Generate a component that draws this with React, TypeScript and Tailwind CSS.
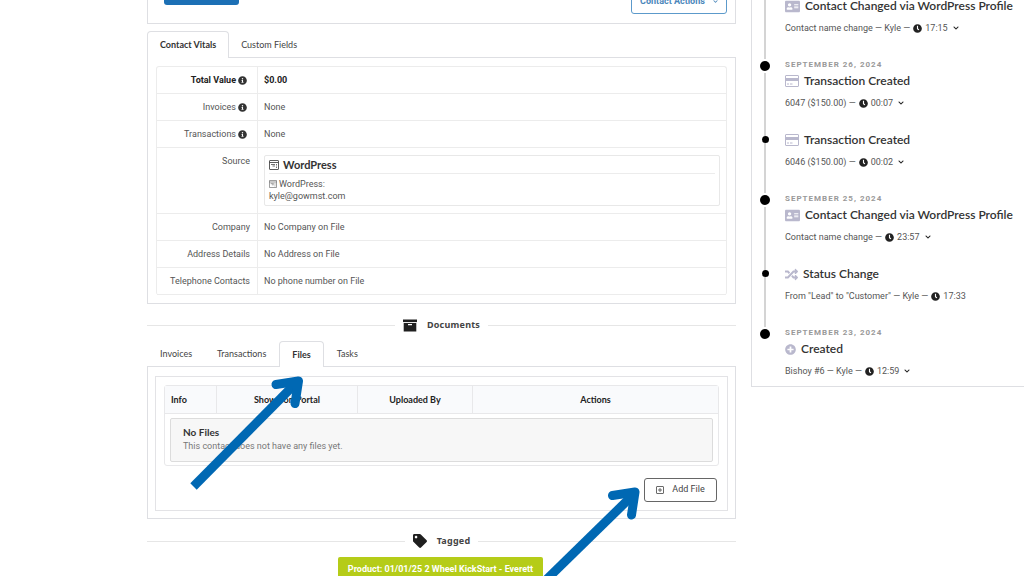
import type { ReactNode } from "react";
import {
  FaAddressCard,
  FaChevronDown,
  FaClock,
  FaInfoCircle,
  FaPlusCircle,
  FaRandom,
  FaTag,
} from "react-icons/fa";

const vitals = [
  { label: "Company", value: "No Company on File" },
  { label: "Address Details", value: "No Address on File" },
  { label: "Telephone Contacts", value: "No phone number on File" },
];

type TimelineEntry = {
  date?: string;
  icon: ReactNode;
  title: string;
  meta: string;
  time: string;
  expandable?: boolean;
};

function CardIcon() {
  return (
    <svg viewBox="0 0 14 12" className="h-3 w-3.5" aria-hidden>
      <rect x="0.5" y="0.5" width="13" height="11" rx="0.5" fill="none" stroke="currentColor" />
      <rect x="1" y="3" width="12" height="3" fill="currentColor" />
      <path d="M2 9h2M5 9h2.5" stroke="currentColor" />
    </svg>
  );
}

function FormIcon({ className }: { className: string }) {
  return (
    <svg viewBox="0 0 10 10" className={className} fill="none" stroke="currentColor" aria-hidden>
      <rect x="0.5" y="0.5" width="9" height="9" rx="0.5" strokeWidth="0.8" />
      <path d="M0.5 2.5h9" strokeWidth="0.8" />
      <path d="M2 4.5h4M7 4.5h1M3.5 6h2.500M7 6h1M7 7.500h1" strokeWidth="0.7" />
    </svg>
  );
}

function ArchiveIcon() {
  return (
    <svg viewBox="0 0 14 13" className="h-[13px] w-3.5" fill="#1f1f1f" aria-hidden>
      <path d="M0 0.5h14v2.6H0z" />
      <path d="M0.7 3.9h12.6v8.6H0.7zM5 5v1.2h4V5z" fillRule="evenodd" />
    </svg>
  );
}

const timeline: TimelineEntry[] = [
  {
    icon: <FaAddressCard className="size-[15px]" />,
    title: "Contact Changed via WordPress Profile",
    meta: "Contact name change — Kyle —",
    time: "17:15",
    expandable: true,
  },
  {
    date: "September 26, 2024",
    icon: <CardIcon />,
    title: "Transaction Created",
    meta: "6047 ($150.00) —",
    time: "00:07",
    expandable: true,
  },
  {
    icon: <CardIcon />,
    title: "Transaction Created",
    meta: "6046 ($150.00) —",
    time: "00:02",
    expandable: true,
  },
  {
    date: "September 25, 2024",
    icon: <FaAddressCard className="size-[15px]" />,
    title: "Contact Changed via WordPress Profile",
    meta: "Contact name change —",
    time: "23:57",
    expandable: true,
  },
  {
    icon: <FaRandom className="size-[13px]" />,
    title: "Status Change",
    meta: "From \"Lead\" to \"Customer\" — Kyle —",
    time: "17:33",
  },
  {
    date: "September 23, 2024",
    icon: <FaPlusCircle className="size-[11px]" />,
    title: "Created",
    meta: "Bishoy #6 — Kyle —",
    time: "12:59",
    expandable: true,
  },
];

function VitalRow({ label, info, bold, children }: {
  label: string;
  info?: boolean;
  bold?: boolean;
  children: ReactNode;
}) {
  return (
    <tr className={bold ? "font-bold text-[#222]" : ""}>
      <th
        scope="row"
        className={
          "w-[101px] border-r border-b border-[#ececec] py-[7px] pr-[7px] text-right align-top leading-3 whitespace-nowrap " +
          (bold ? "font-bold" : "font-normal")
        }
      >
        <span className={info ? "inline-flex items-center gap-0.5 pr-[3px]" : ""}>
          {label}
          {info && <FaInfoCircle className="size-[9px] text-[#333]" />}
        </span>
      </th>
      <td className="border-b border-[#ececec] px-1.5 py-[7px] align-top leading-3">{children}</td>
    </tr>
  );
}

function Divider({ icon, label }: { icon: ReactNode; label: string }) {
  return (
    <div className="flex h-4 items-center">
      <span className="h-px flex-1 bg-[#e6e6e6]" />
      <h2 className="flex items-center gap-2.5 px-2 font-['Noto_Sans',sans-serif] font-bold tracking-wide text-[#444]">
        {icon}
        {label}
      </h2>
      <span className="h-px flex-1 bg-[#e6e6e6]" />
    </div>
  );
}

function Tab({ active, children }: { active?: boolean; children: ReactNode }) {
  return (
    <button
      type="button"
      role="tab"
      aria-selected={!!active}
      className={
        active
          ? "-mb-px rounded-t border border-b-0 border-[#dedfe3] bg-white px-3 font-bold text-[#333]"
          : "px-3 pt-px text-[#444]"
      }
    >
      {children}
    </button>
  );
}

function TimelineItem({ entry, first, last }: { entry: TimelineEntry; first: boolean; last: boolean }) {
  return (
    <li className="flex gap-[15px]">
      <div className="flex w-2.5 flex-none flex-col items-center">
        {entry.date && (
          <>
            <span className="h-0.5 w-0.5 bg-[#d4d4d4]" />
            <span className="my-0.5 size-2.5 rounded-full bg-black" />
          </>
        )}
        {!entry.date && !first && (
          <>
            <span className="h-1 w-0.5 bg-[#d4d4d4]" />
            <span className="size-[7px] rounded-full bg-black" />
          </>
        )}
        {!last && <span className="w-0.5 flex-1 bg-[#d4d4d4]" />}
      </div>
      <div className={last ? "pb-[9px]" : "pb-[23px]"}>
        {entry.date && (
          <p className="text-[8px] leading-4 font-bold tracking-[1px] text-[#999] uppercase">{entry.date}</p>
        )}
        <h3 className="flex h-4 items-center gap-[5px] font-['Lato',sans-serif] text-[12px] font-semibold whitespace-nowrap text-[#333]">
          <span className="text-[#b9b8cd]">{entry.icon}</span>
          {entry.title}
        </h3>
        <p className="mt-2 flex items-center gap-[3px] leading-3 whitespace-nowrap text-[#555]">
          {entry.meta}
          <FaClock className="size-[9px] text-[#222]" />
          {entry.time}
          {entry.expandable && (
            <button type="button" aria-label="Show details" className="ml-0.5 text-[#222]">
              <FaChevronDown className="size-1.5" />
            </button>
          )}
        </p>
      </div>
    </li>
  );
}

function Arrows() {
  return (
    <svg
      viewBox="0 0 1024 576"
      className="pointer-events-none absolute top-0 left-0 w-full"
      fill="none"
      stroke="#0068b3"
      aria-hidden
    >
      <path d="M193.500 486.500L297 382" strokeWidth="9" />
      <path d="M276 384.5L298.5 381L295 403.5" strokeWidth="9" strokeLinecap="round" strokeLinejoin="round" />
      <path d="M546 580L634 494" strokeWidth="9" />
      <path d="M612.5 495.5L635 492L631.5 515" strokeWidth="9" strokeLinecap="round" strokeLinejoin="round" />
    </svg>
  );
}

export default function App() {
  return (
    <div className="relative h-screen overflow-hidden bg-white font-['Roboto',sans-serif] text-[9px] text-[#555]">
      <div className="-mt-5 flex items-start gap-[15px] pl-[147px]">
        <main className="min-w-0 flex-1">
          <section className="flex h-11 items-start justify-between border border-[#dedfe3] pr-2 pl-4">
            <button type="button" aria-label="Save" className="h-6 w-[75px] rounded-[3px] bg-[#1c70b5]" />
            <button
              type="button"
              className="mt-2 flex h-[25px] w-24 items-center justify-center gap-2 rounded-[3px] border border-[#5c9acb] font-bold text-[#4a87bb]"
            >
              Contact Actions
              <FaChevronDown className="size-[5px]" />
            </button>
          </section>

          <div role="tablist" className="mt-[7px] flex h-[26px] font-['Lato',sans-serif]">
            <Tab active>Contact Vitals</Tab>
            <Tab>Custom Fields</Tab>
          </div>
          <section className="border border-[#dedfe3] p-2">
            <div className="rounded-[3px] border border-b-0 border-[#ececec]">
              <table className="w-full border-separate border-spacing-0">
                <tbody>
                  <VitalRow label="Total Value" info bold>$0.00</VitalRow>
                  <VitalRow label="Invoices" info>None</VitalRow>
                  <VitalRow label="Transactions" info>None</VitalRow>
                  <VitalRow label="Source">
                    <div className="rounded-[2px] border border-[#e8e8e8] px-1 pt-px pb-[3px]">
                      <h4 className="flex h-[17px] items-center gap-1 border-b border-[#ececec] font-['Lato',sans-serif] text-[11px] font-bold text-[#333]">
                        <FormIcon className="size-2.5" />
                        WordPress
                      </h4>
                      <p className="mt-1 flex items-center gap-0.5">
                        <FormIcon className="size-2" />
                        WordPress:
                      </p>
                      <p>kyle@gowmst.com</p>
                    </div>
                  </VitalRow>
                  {vitals.map((row) => (
                    <VitalRow key={row.label} label={row.label}>{row.value}</VitalRow>
                  ))}
                </tbody>
              </table>
            </div>
          </section>

          <div className="mt-[13px]">
            <Divider icon={<ArchiveIcon />} label="Documents" />
          </div>

          <div role="tablist" className="mt-2 flex h-[25px] gap-px pl-px font-['Lato',sans-serif]">
            <Tab>Invoices</Tab>
            <Tab>Transactions</Tab>
            <Tab active>Files</Tab>
            <Tab>Tasks</Tab>
          </div>
          <section className="border border-[#dedfe3] px-[7px] pt-[9px] pb-[7px]">
            <div className="border border-[#e3e3e6] p-2">
              <div className="rounded-[3px] border border-[#e8e8ea]">
                <table className="w-full border-separate border-spacing-0">
                  <thead>
                    <tr className="bg-[#f9fafc] font-['Lato',sans-serif] text-[#222]">
                      <th className="h-7 w-[52px] border-r border-b border-[#e8e8ea] px-1.5 text-left">Info</th>
                      <th className="w-[141px] border-r border-b border-[#e8e8ea]">Shown on Portal</th>
                      <th className="w-[115px] border-r border-b border-[#e8e8ea]">Uploaded By</th>
                      <th className="border-b border-[#e8e8ea]">Actions</th>
                    </tr>
                  </thead>
                  <tbody>
                    <tr>
                      <td colSpan={4} className="px-[5px] pt-1 pb-[3px]">
                        <div className="rounded-[2px] border border-[#dcdcdc] bg-[#f7f7f7] px-3 pt-[6px] pb-2">
                          <h4 className="font-['Lato',sans-serif] text-[10px] leading-[14px] font-bold text-[#333]">No Files</h4>
                          <p className="leading-[14px] text-[#777]">This contact does not have any files yet.</p>
                        </div>
                      </td>
                    </tr>
                  </tbody>
                </table>
              </div>
              <div className="mt-3 flex justify-end pr-0.5">
                <button
                  type="button"
                  className="flex h-6 w-[73px] items-center justify-center gap-2 rounded-[3px] border border-[#666] text-[#444]"
                >
                  <svg viewBox="0 0 8 8" className="size-2" fill="none" stroke="currentColor" strokeWidth="0.8" aria-hidden>
                    <rect x="0.5" y="0.5" width="7" height="7" rx="0.5" />
                    <path d="M4 2v4M2 4h4" />
                  </svg>
                  Add File
                </button>
              </div>
            </div>
          </section>

          <div className="mt-3.5">
            <Divider icon={<FaTag className="size-3.5 text-[#1f1f1f]" />} label="Tagged" />
          </div>
          <div className="mt-2 flex justify-center pr-0.5">
            <span className="rounded-[2px] bg-[#b5cc18] px-2.5 py-1.5 font-bold text-white">
              Product: 01/01/25 2 Wheel KickStart - Everett
            </span>
          </div>
        </main>

        <aside className="w-[273px] flex-none overflow-hidden border-b border-l border-[#dedfe3] pt-[18px] pl-2">
          <ol>
            {timeline.map((entry, i) => (
              <TimelineItem key={i} entry={entry} first={i === 0} last={i === timeline.length - 1} />
            ))}
          </ol>
        </aside>
      </div>
      <Arrows />
    </div>
  );
}
